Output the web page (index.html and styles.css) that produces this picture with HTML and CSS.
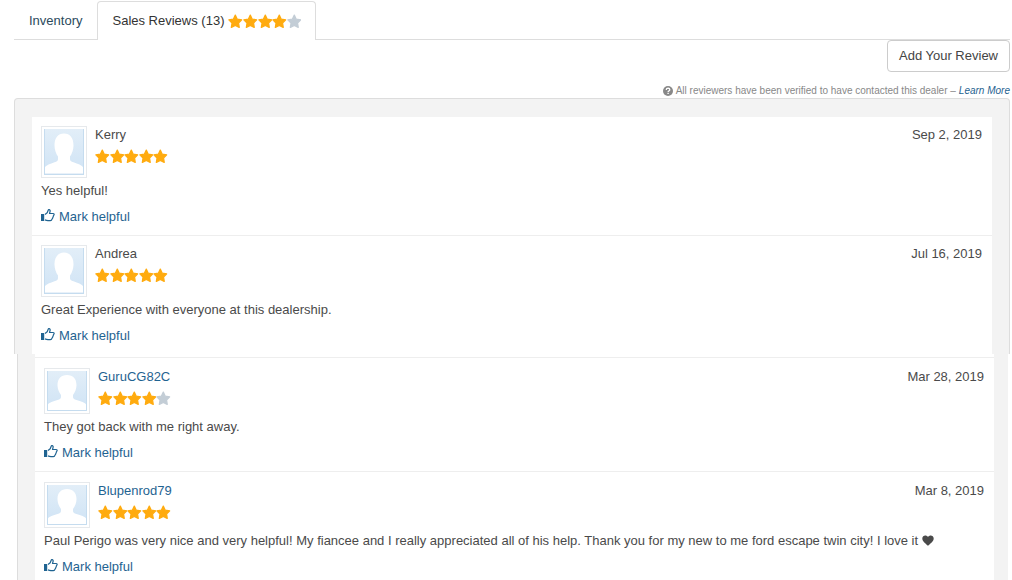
FILE: index.html
```
<!DOCTYPE html>
<html lang="en">
<head>
    <meta charset="UTF-8">
    <meta name="viewport" content="width=device-width, initial-scale=1">
    <title>Sales Reviews</title>
    <link rel="stylesheet" href="styles.css">
</head>
<body>
<!-- shared icons -->
<svg class="sprite" aria-hidden="true">
    <defs>
        <linearGradient id="sky" x1="0" y1="0" x2="0" y2="1">
            <stop offset="0" stop-color="#e2eef8"/>
            <stop offset="1" stop-color="#cfe3f5"/>
        </linearGradient>
    </defs>
    <symbol id="star" viewBox="0 0 14 14">
        <path d="M7 .9l1.9 3.9 4.3.6-3.1 3 .7 4.3L7 10.7l-3.8 2 .7-4.3-3.1-3 4.3-.6z" stroke="currentColor" stroke-width="1.200" stroke-linejoin="round" fill="currentColor"/>
    </symbol>
    <symbol id="thumb" viewBox="0 0 14 13">
        <path d="M0 5h3.2v7H0z" fill="currentColor"/>
        <path d="M4 5.4L6.2 3.8 7.3 1q.3-.6 1-.4 1.100.4.8 1.700L8.500 4.500h3.600q1.200.1 1 1.200-.1.700-.700 1 0 1.300-.600 1.800-.1 1.200-.800 1.600-.3 1.400-1.700 1.500H7q-1.600-.1-3-.700" fill="none" stroke="currentColor" stroke-width="1.200" stroke-linejoin="round"/>
    </symbol>
    <symbol id="person" viewBox="0 0 40 40" preserveAspectRatio="none">
        <path d="M0 0h40v40H0z" fill="url(#sky)"/>
        <path d="M20 4c6 0 9.700 4 9.500 10.500-.1 4-1.700 7-3.500 9.500v2c0 1.600 1 2.200 3.500 3 4.500 1.300 8 2.500 10.500 5V39H0v-5c2.500-2.500 6-3.700 10.500-5 2.500-.8 3.500-1.400 3.500-3v-2c-1.800-2.500-3.400-5.500-3.500-9.500C10.300 8 14 4 20 4z" fill="#fff"/>
        <path d="M.5 0v39.500h39V0" fill="none" stroke="#c5dcef" stroke-width="1"/>
    </symbol>
    <symbol id="question" viewBox="0 0 10 10">
        <circle cx="5" cy="5" r="5" fill="currentColor"/>
        <path d="M3.200 4q.1-1.800 1.900-1.800 1.700.1 1.700 1.500 0 .8-.9 1.200-.8.300-.8 1" fill="none" stroke="#fff" stroke-width="1.300"/>
        <path d="M4.400 6.700h1.400V8H4.400z" fill="#fff"/>
    </symbol>
    <symbol id="heart" viewBox="0 0 12 11">
        <path d="M6 10.800C4.500 8.800.3 6.800.3 3.400.3.300 4.400-.7 6 2 7.600-.7 11.700.3 11.700 3.400c0 3.400-4.200 5.400-5.700 7.400z" fill="currentColor"/>
    </symbol>
</svg>

<nav class="tabs">
    <a class="tab" href="#inventory">Inventory</a>
    <a class="tab active" href="#reviews">Sales Reviews (13)
        <span class="stars" role="img" aria-label="4 of 5 stars">
            <svg><use href="#star"/></svg><svg><use href="#star"/></svg><svg><use href="#star"/></svg><svg><use href="#star"/></svg><svg class="off"><use href="#star"/></svg>
        </span>
    </a>
</nav>

<main id="reviews">
    <div class="actions">
        <button type="button" class="add">Add Your Review</button>
    </div>
    <p class="note">
        <svg><use href="#question"/></svg>
        <span>All reviewers have been verified to have contacted this dealer –</span>
        <a href="#learn"><i>Learn More</i></a>
    </p>

    <section class="panel guests">
        <article class="review">
            <header>
                <svg class="avatar"><use href="#person"/></svg>
                <div class="who">
                    <span class="name">Kerry</span>
                    <span class="stars" role="img" aria-label="5 of 5 stars">
                        <svg><use href="#star"/></svg><svg><use href="#star"/></svg><svg><use href="#star"/></svg><svg><use href="#star"/></svg><svg><use href="#star"/></svg>
                    </span>
                </div>
                <time datetime="2019-09-02">Sep 2, 2019</time>
            </header>
            <p>Yes helpful!</p>
            <a class="helpful" href="#helpful"><svg><use href="#thumb"/></svg>Mark helpful</a>
        </article>
        <article class="review">
            <header>
                <svg class="avatar"><use href="#person"/></svg>
                <div class="who">
                    <span class="name">Andrea</span>
                    <span class="stars" role="img" aria-label="5 of 5 stars">
                        <svg><use href="#star"/></svg><svg><use href="#star"/></svg><svg><use href="#star"/></svg><svg><use href="#star"/></svg><svg><use href="#star"/></svg>
                    </span>
                </div>
                <time datetime="2019-07-16">Jul 16, 2019</time>
            </header>
            <p>Great Experience with everyone at this dealership.</p>
            <a class="helpful" href="#helpful"><svg><use href="#thumb"/></svg>Mark helpful</a>
        </article>
    </section>

    <section class="panel members">
        <article class="review">
            <header>
                <svg class="avatar"><use href="#person"/></svg>
                <div class="who">
                    <a class="name" href="#GuruCG82C">GuruCG82C</a>
                    <span class="stars" role="img" aria-label="4 of 5 stars">
                        <svg><use href="#star"/></svg><svg><use href="#star"/></svg><svg><use href="#star"/></svg><svg><use href="#star"/></svg><svg class="off"><use href="#star"/></svg>
                    </span>
                </div>
                <time datetime="2019-03-28">Mar 28, 2019</time>
            </header>
            <p>They got back with me right away.</p>
            <a class="helpful" href="#helpful"><svg><use href="#thumb"/></svg>Mark helpful</a>
        </article>
        <article class="review">
            <header>
                <svg class="avatar"><use href="#person"/></svg>
                <div class="who">
                    <a class="name" href="#Blupenrod79">Blupenrod79</a>
                    <span class="stars" role="img" aria-label="5 of 5 stars">
                        <svg><use href="#star"/></svg><svg><use href="#star"/></svg><svg><use href="#star"/></svg><svg><use href="#star"/></svg><svg><use href="#star"/></svg>
                    </span>
                </div>
                <time datetime="2019-03-08">Mar 8, 2019</time>
            </header>
            <p>Paul Perigo was very nice and very helpful! My fiancee and I really appreciated all of his help. Thank you for my new to me ford escape twin city! I love it <svg class="heart"><use href="#heart"/></svg></p>
            <a class="helpful" href="#helpful"><svg><use href="#thumb"/></svg>Mark helpful</a>
        </article>
    </section>
</main>
</body>
</html>
```

FILE: styles.css
```
* {
    box-sizing: border-box;
    margin: 0;
    padding: 0;
}
body {
    padding: 1px 2px 0 14px;
    background: #fff;
    color: #4a4a4a;
    font: 13px/20px "Liberation Sans", Arial, sans-serif;
}
a {
    color: #1f6391;
    text-decoration: none;
}
.sprite {
    display: block;
    width: 0;
    height: 0;
}

/* tabs */
.tabs {
    display: flex;
    height: 39px;
    border-bottom: 1px solid #ddd;
}
.tab {
    display: flex;
    align-items: center;
    gap: 4px;
    height: 39px;
    padding: 0 14px;
    border: 1px solid transparent;
    border-bottom: 0;
    color: #2b4a5c;
}
.tab.active {
    background: #fff;
    border-color: #ddd;
    border-radius: 4px 4px 0 0;
    color: #333;
}

.stars {
    display: flex;
    width: 73px;
    color: #ffab0f;
}
.stars svg {
    flex: 1;
    min-width: 0;
    height: 15px;
}
.stars .off {
    color: #c3cdd6;
}

/* button and note above the list */
.actions {
    display: flex;
    justify-content: flex-end;
}
.add {
    height: 32px;
    padding: 0 11px;
    background: #fff;
    border: 1px solid #ccc;
    border-radius: 4px;
    color: #444;
    font: inherit;
}
.note {
    display: flex;
    justify-content: flex-end;
    align-items: center;
    gap: 3px;
    margin-top: 12px;
    color: #888;
    font-size: 10px;
    line-height: 14px;
}
.note svg {
    width: 10px;
    height: 10px;
}

/* reviews */
.panel {
    background: #f3f3f3;
    border-left: 1px solid #ddd;
}
.guests {
    padding: 18px 17px 0;
    border-top: 1px solid #ddd;
    border-right: 1px solid #ddd;
    border-radius: 4px 4px 0 0;
}
.members {
    margin: 0 2px 0 3px;
    padding: 0 14px 0 17px;
}
.review {
    padding: 9px 10px 8px 9px;
    background: #fff;
}
.review + .review {
    border-top: 1px solid #eee;
}
.members .review {
    padding-top: 10px;
}
.members .review:first-child {
    border-top: 1px solid #eee;
}
.members::before {
    content: "";
    display: block;
    height: 3px;
    background: #fff;
}
.review header {
    display: flex;
    gap: 8px;
    margin-bottom: 3px;
}
.avatar {
    width: 46px;
    height: 52px;
    padding: 2px;
    border: 1px solid #e6e9ec;
}
.members .avatar {
    height: 46px;
}
.who {
    flex: 1;
}
.name {
    display: block;
    margin-bottom: 5px;
    line-height: 18px;
}
time {
    line-height: 18px;
}
.helpful {
    display: flex;
    gap: 4px;
    margin-top: 6px;
}
.helpful svg {
    width: 14px;
    height: 13px;
    margin-top: 2px;
}
.heart {
    width: 12px;
    height: 11px;
    vertical-align: -1px;
}
```
